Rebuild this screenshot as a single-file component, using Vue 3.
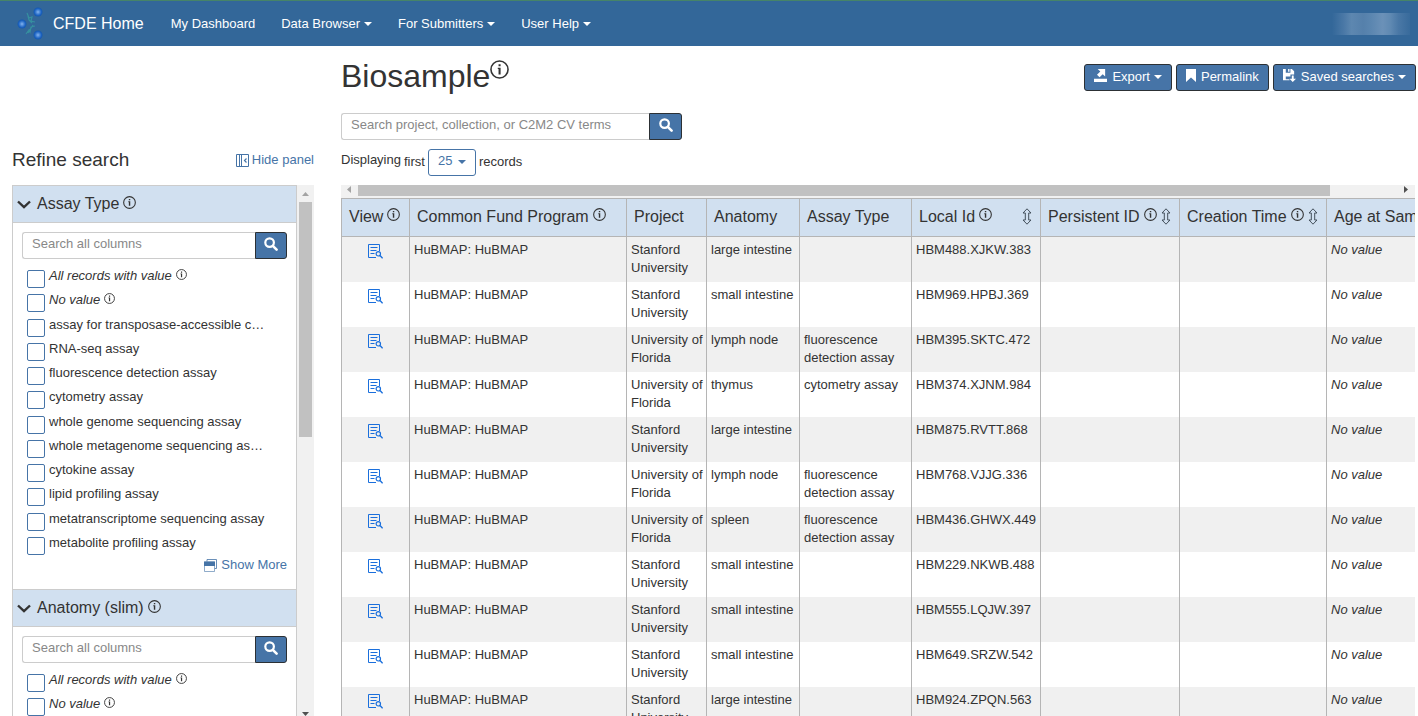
<script setup>
import { h } from 'vue'

const InfoIcon = () =>
  h('svg', { class: 'info', viewBox: '0 0 12 12', 'aria-hidden': 'true' }, [
    h('circle', { cx: 6, cy: 6, r: 5.4, fill: 'none', stroke: 'currentColor', 'stroke-width': 1 }),
    h('path', { d: 'M5.4 2.7h1.3v1.3H5.400zM4.900 4.900h1.800v4.200H5.400V5.700h-.5z', fill: 'currentColor' }),
  ])

const SearchIcon = () =>
  h('svg', { class: 'glass', viewBox: '0 0 14 14', 'aria-hidden': 'true' }, [
    h('circle', { cx: 5.6, cy: 5.6, r: 4.3, fill: 'none', stroke: 'currentColor', 'stroke-width': 2.2 }),
    h('path', { d: 'M8.8 8.8l3.8 3.8', stroke: 'currentColor', 'stroke-width': 2.6, 'stroke-linecap': 'round' }),
  ])

const menus = [
  { label: 'My Dashboard', caret: false },
  { label: 'Data Browser', caret: true },
  { label: 'For Submitters', caret: true },
  { label: 'User Help', caret: true },
]

const meta = [
  { label: 'All records with value', meta: true },
  { label: 'No value', meta: true },
]

const facets = [
  {
    id: 'assay',
    title: 'Assay Type',
    options: [
      ...meta,
      { label: 'assay for transposase-accessible c…' },
      { label: 'RNA-seq assay' },
      { label: 'fluorescence detection assay' },
      { label: 'cytometry assay' },
      { label: 'whole genome sequencing assay' },
      { label: 'whole metagenome sequencing as…' },
      { label: 'cytokine assay' },
      { label: 'lipid profiling assay' },
      { label: 'metatranscriptome sequencing assay' },
      { label: 'metabolite profiling assay' },
    ],
    more: true,
  },
  { id: 'anatomy', title: 'Anatomy (slim)', options: meta, more: false },
]

const columns = [
  { key: 'view', label: 'View', info: true },
  { key: 'program', label: 'Common Fund Program', info: true },
  { key: 'project', label: 'Project' },
  { key: 'anatomy', label: 'Anatomy' },
  { key: 'assay', label: 'Assay Type' },
  { key: 'local', label: 'Local Id', info: true, sort: true },
  { key: 'pid', label: 'Persistent ID', info: true, sort: true },
  { key: 'created', label: 'Creation Time', info: true, sort: true },
  { key: 'age', label: 'Age at Sampling', sort: true },
]

const S = 'Stanford University'
const F = 'University of Florida'
const rows = [
  [S, 'large intestine', '', 'HBM488.XJKW.383'],
  [S, 'small intestine', '', 'HBM969.HPBJ.369'],
  [F, 'lymph node', 'fluorescence detection assay', 'HBM395.SKTC.472'],
  [F, 'thymus', 'cytometry assay', 'HBM374.XJNM.984'],
  [S, 'large intestine', '', 'HBM875.RVTT.868'],
  [F, 'lymph node', 'fluorescence detection assay', 'HBM768.VJJG.336'],
  [F, 'spleen', 'fluorescence detection assay', 'HBM436.GHWX.449'],
  [S, 'small intestine', '', 'HBM229.NKWB.488'],
  [S, 'small intestine', '', 'HBM555.LQJW.397'],
  [S, 'small intestine', '', 'HBM649.SRZW.542'],
  [S, 'large intestine', '', 'HBM924.ZPQN.563'],
]
</script>

<template>
  <div class="page">
    <nav class="navbar">
      <a class="brand" href="#">
        <svg class="logo" viewBox="0 0 28 34" aria-hidden="true">
          <defs>
            <radialGradient id="ball">
              <stop offset="0" stop-color="#86b4ee" />
              <stop offset=".4" stop-color="#4a88d8" />
              <stop offset=".75" stop-color="#1c62c0" />
              <stop offset="1" stop-color="#1458b0" />
            </radialGradient>
          </defs>
          <path
            d="M11 6l2 5 3-1-1 4 4 1M12 9l1 4 3 3M10 27l3-4 1 2 1-5 4-1M12 26l5-8"
            fill="none" stroke="#379aa0" stroke-width="1.200" opacity=".8"
          />
          <circle cx="22" cy="5" r="4.500" fill="url(#ball)" />
          <circle cx="6" cy="17" r="4.500" fill="url(#ball)" />
          <circle cx="22" cy="28" r="4.500" fill="url(#ball)" />
        </svg>
        <span>CFDE Home</span>
      </a>
      <a v-for="m in menus" :key="m.label" class="menu" href="#">
        {{ m.label }}<i v-if="m.caret" class="caret"></i>
      </a>
      <span class="user"></span>
    </nav>

    <div class="columns">
      <aside class="side">
        <div class="side-head">
          <h2>Refine search</h2>
          <button class="link" type="button">
            <svg class="hide-icon" viewBox="0 0 13 13" aria-hidden="true">
              <path d="M.5.5h12v12H.5zM3.5.5v12M5.5.5v12" fill="none" stroke="currentColor" />
              <path d="M10.5 4.5l-2 2 2 2" fill="none" stroke="currentColor" stroke-width="1.2" />
            </svg>
            Hide panel
          </button>
        </div>
        <div class="side-scroll">
          <div class="facets">
            <section v-for="f in facets" :key="f.id" class="facet">
              <h3>
                <svg class="chevron" viewBox="0 0 14 9" aria-hidden="true">
                  <path d="M1 1.500L7 7.200l6-5.700" fill="none" stroke="currentColor" stroke-width="2.400" />
                </svg>
                {{ f.title }}
                <InfoIcon />
              </h3>
              <div class="facet-body">
                <div class="search">
                  <input type="text" placeholder="Search all columns" :aria-label="'Search ' + f.title" />
                  <button type="button" aria-label="Search"><SearchIcon /></button>
                </div>
                <ul>
                  <li v-for="(o, i) in f.options" :key="o.label">
                    <input :id="f.id + i" type="checkbox" />
                    <label :for="f.id + i" :class="{ meta: o.meta }">{{ o.label }}<InfoIcon v-if="o.meta" /></label>
                  </li>
                </ul>
                <button v-if="f.more" class="link more" type="button">
                  <svg class="more-icon" viewBox="0 0 13 13" aria-hidden="true">
                    <path d="M3 2.500V.5h9.500v9h-2" fill="none" stroke="currentColor" opacity=".8" />
                    <path d="M.5 3h10v9.500H.5z" fill="#fff" stroke="currentColor" stroke-opacity=".6" />
                    <path d="M0 2.500h11V7H0z" fill="currentColor" />
                  </svg>
                  Show More
                </button>
              </div>
            </section>
          </div>
          <div class="vbar" aria-hidden="true">
            <svg viewBox="0 0 7 4"><path d="M0 4l3.500-4L7 4z" fill="#a3a3a3" /></svg>
            <div class="vtrack"><div class="vthumb"></div></div>
            <svg viewBox="0 0 7 4"><path d="M0 0l3.500 4L7 0z" fill="#505050" /></svg>
          </div>
        </div>
      </aside>

      <main class="main">
        <header class="title-row">
          <h1>Biosample<InfoIcon /></h1>
          <div class="actions">
            <button type="button">
              <svg class="act export" viewBox="0 0 14 14" aria-hidden="true">
                <path d="M0 10.500h14V14H0zM4 0h8v8L9.400 5.600 6 9 3.200 6.300l3.600-3.500z" fill="currentColor" />
              </svg>
              Export<i class="caret"></i>
            </button>
            <button type="button">
              <svg class="act mark" viewBox="0 0 10 13" aria-hidden="true">
                <path d="M0 0h10v13L5 8.500 0 13z" fill="currentColor" />
              </svg>
              Permalink
            </button>
            <button type="button">
              <svg class="act save" viewBox="0 0 14 14" aria-hidden="true">
                <path fill-rule="evenodd" d="M0 0h3v4h5V0h1.500L12 2.500V6H8v2H3v3h4v1H0zM5.500 0H7v3H5.500z" fill="currentColor" />
                <path d="M9.500 7h2v3.500H14L10.500 14 7 10.500h2.500z" fill="currentColor" />
              </svg>
              Saved searches<i class="caret"></i>
            </button>
          </div>
        </header>

        <div class="search wide">
          <input type="text" placeholder="Search project, collection, or C2M2 CV terms" aria-label="Search records" />
          <button type="button" aria-label="Search"><SearchIcon /></button>
        </div>

        <div class="showing">
          <span>Displaying</span>
          <label for="limit">first</label>
          <span class="limit">
            <select id="limit"><option>25</option></select>
            <i class="caret"></i>
          </span>
          <span>records</span>
        </div>

        <div class="hbar" aria-hidden="true">
          <svg viewBox="0 0 4 7"><path d="M4 0L0 3.500 4 7z" fill="#a3a3a3" /></svg>
          <div class="htrack"><div class="hthumb"></div></div>
          <svg viewBox="0 0 4 7"><path d="M0 0l4 3.500L0 7z" fill="#505050" /></svg>
        </div>
        <div class="table-wrap">
          <table>
            <colgroup>
              <col v-for="c in columns" :key="c.key" :class="'c-' + c.key" />
            </colgroup>
            <thead>
              <tr>
                <th v-for="c in columns" :key="c.key" scope="col">
                  <div class="th">
                    <span>{{ c.label }}</span>
                    <InfoIcon v-if="c.info" />
                    <svg v-if="c.sort" class="sort" viewBox="0 0 10 17" aria-hidden="true">
                      <path
                        d="M5 .8L9 5H6.700v7H9L5 16.200 1 12h2.300V5H1z"
                        fill="none" stroke="currentColor" stroke-width="1" stroke-linejoin="round"
                      />
                    </svg>
                  </div>
                </th>
              </tr>
            </thead>
            <tbody>
              <tr v-for="r in rows" :key="r[3]">
                <td class="view">
                  <a href="#" aria-label="View record">
                    <svg viewBox="0 0 15 15" aria-hidden="true">
                      <path d="M11.500 7V.5H.5v13H8" fill="none" stroke="#1a6fdc" />
                      <path d="M2.500 3.500h7M2.500 6.500h6M2.500 9.500h4" stroke="#1a6fdc" />
                      <circle cx="10.300" cy="9.800" r="2.200" fill="none" stroke="#1a6fdc" stroke-width="1.200" />
                      <path d="M12 11.500l2.600 2.800" stroke="#1a6fdc" stroke-width="1.400" />
                    </svg>
                  </a>
                </td>
                <td>HuBMAP: HuBMAP</td>
                <td>{{ r[0] }}</td>
                <td>{{ r[1] }}</td>
                <td>{{ r[2] }}</td>
                <td>{{ r[3] }}</td>
                <td></td>
                <td></td>
                <td><em>No value</em></td>
              </tr>
            </tbody>
          </table>
        </div>
      </main>
    </div>
  </div>
</template>

<style>
body { margin: 0; }
</style>

<style scoped>
.page {
  height: 100vh;
  display: flex;
  flex-direction: column;
  overflow: hidden;
  background: #fff;
  color: #333;
  font: 13px/18px "Liberation Sans", Arial, sans-serif;
}
.page :deep(svg) { flex: none; display: block; }
h1, h2, h3, ul { margin: 0; padding: 0; font-weight: 400; }
button, input, select { font: inherit; box-sizing: border-box; margin: 0; }
button { cursor: pointer; }
.caret {
  display: inline-block;
  border: 4px solid transparent;
  border-top-color: currentColor;
  border-bottom: 0;
  flex: none;
}

.navbar {
  flex: none;
  display: flex;
  align-items: center;
  height: 45px;
  padding: 0 8px 0 16px;
  border-top: 1px solid #468468;
  background: #336799;
}
.navbar a { color: #fff; text-decoration: none; display: flex; align-items: center; }
.brand { gap: 9px; font-size: 16px; margin-right: 27px; }
.logo { width: 28px; height: 34px; }
.menu { margin-right: 26px; gap: 4px; }
.user {
  width: 78px;
  height: 22px;
  margin-left: auto;
  background: linear-gradient(90deg, #336799, #4a78a6 15%, #5d87b0 25%, #5580ab 40%, #5b86b0 50%, #6b91b8 65%, #5f89b2 75%, #4a78a6 85%, #3e6f9f 95%, #386b9c);
}

.columns { flex: 1; min-height: 0; display: flex; }
.side {
  flex: none;
  width: 302px;
  padding-left: 12px;
  margin-right: 27px;
  display: flex;
  flex-direction: column;
}
.side-head {
  display: flex;
  justify-content: space-between;
  align-items: center;
  height: 24px;
  padding: 102px 0 13px;
}
h2 { font-size: 19px; line-height: 24px; }
.link {
  display: flex;
  align-items: center;
  gap: 3px;
  padding: 0;
  border: 0;
  background: none;
  color: #4674a7;
}
.hide-icon { width: 13px; height: 13px; }
.side-scroll { flex: 1; min-height: 0; display: flex; }
.facets { flex: 1; overflow: hidden; border: 1px solid #ccc; border-width: 0 1px; }
h3 {
  display: flex;
  align-items: center;
  height: 36px;
  padding: 0 4px;
  border: 1px solid #ccc;
  border-width: 1px 0;
  background: #d1e0f0;
  font-size: 16px;
}
.chevron { width: 14px; height: 9px; margin-right: 6px; }
h3 :deep(.info) { width: 13px; height: 13px; margin: 0 0 4px 4px; }
.facet-body { padding: 9px 9px 17px; }
.search { display: flex; height: 27px; }
.search input {
  flex: 1;
  min-width: 0;
  padding: 0 9px 3px;
  border: 1px solid #ccc;
  border-right: 0;
  border-radius: 3px 0 0 3px;
  background: #fff;
  color: #333;
}
.search input::placeholder { color: #888; opacity: 1; }
.search button {
  width: 32px;
  padding: 0 0 4px;
  display: flex;
  align-items: center;
  justify-content: center;
  border: 1px solid #2c3034;
  border-radius: 0 3px 3px 0;
  background: #4674a7;
  color: #fff;
}
.search :deep(.glass) { width: 14px; height: 14px; }
ul {
  list-style: none;
  display: grid;
  height: 291px;
  grid-template-rows: repeat(12, 1fr);
  margin-top: 8px;
}
li { display: flex; align-items: flex-start; padding-left: 5px; gap: 4px; min-height: 0; }
li input {
  appearance: none;
  flex: none;
  width: 18px;
  height: 18px;
  margin-top: 3px;
  border: 1px solid #4674a7;
  border-radius: 2px;
  background: #fff;
}
label.meta { display: flex; align-items: center; font-style: italic; }
.meta :deep(.info) { width: 11px; height: 11px; margin: 0 0 3px 4px; }
.more { margin-left: auto; gap: 4px; line-height: 14px; }
.more-icon { width: 13px; height: 13px; }
.vbar {
  flex: none;
  width: 17px;
  display: flex;
  flex-direction: column;
  align-items: center;
  background: #f1f1f1;
}
.vbar svg { width: 7px; height: 4px; margin: 7px 0 6px; }
.vbar svg:last-child { margin: 9px 0 0; }
.vtrack { flex: 1; width: 13px; }
.vthumb { height: 47%; background: #c1c1c1; }

.main { flex: 1; min-width: 0; display: flex; flex-direction: column; }
.title-row {
  flex: none;
  display: flex;
  justify-content: space-between;
  align-items: flex-start;
  padding: 11px 2px 0 0;
  height: 56px;
}
h1 { display: flex; font-size: 32px; line-height: 38px; }
h1 :deep(.info) { width: 19px; height: 19px; margin-top: 3px; }
.actions { display: flex; gap: 4px; padding-top: 7px; }
.actions button {
  display: flex;
  align-items: center;
  height: 27px;
  padding: 0 9px 2px;
  border: 1px solid #2c3034;
  border-radius: 3px;
  background: #4674a7;
  color: #fff;
  white-space: nowrap;
}
.actions .caret { margin-left: 4px; }
.act { margin: 0 5px 3px 0; }
.export { width: 13px; height: 13px; }
.mark { width: 10px; height: 13px; }
.save { width: 13px; height: 13px; }
.wide { flex: none; width: 341px; }
.wide button { width: 33px; }
.showing {
  flex: none;
  display: flex;
  align-items: center;
  height: 27px;
  margin: 9px 0;
  gap: 3px;
}
.showing > * { padding-bottom: 1px; }
.showing > span:first-child { padding-bottom: 5px; }
.showing > .limit { display: grid; align-items: center; padding: 0; }
.limit select, .limit .caret { grid-area: 1 / 1; color: #4674a7; }
.limit select {
  appearance: none;
  width: 48px;
  height: 27px;
  padding: 0 0 3px 9px;
  border: 1px solid #4674a7;
  border-radius: 3px;
  background: #fff;
}
.limit .caret { justify-self: end; margin: 0 10px 2px 0; pointer-events: none; }

.hbar {
  flex: none;
  display: flex;
  height: 13px;
  margin-right: 3px;
  background: #f1f1f1;
}
.hbar svg { width: 4px; height: 7px; margin: 1px 7px 0 6px; }
.htrack { flex: 1; }
.hthumb { width: 93.5%; height: 11px; background: #c1c1c1; }
.table-wrap { flex: 1; min-height: 0; overflow: hidden; margin-right: 3px; }
table { width: 1150px; table-layout: fixed; border-collapse: separate; border-spacing: 0; }
.c-view { width: 68px; }
.c-program { width: 217px; }
.c-project { width: 80px; }
.c-anatomy { width: 93px; }
.c-assay { width: 112px; }
.c-local { width: 129px; }
.c-pid { width: 139px; }
.c-created { width: 147px; }
.c-age { width: 165px; }
th {
  height: 35px;
  padding: 0 8px 2px 7px;
  border: 1px solid #b5b5b5;
  border-right: 0;
  background: #d1e0f0;
  font-size: 16px;
  font-weight: 400;
  white-space: nowrap;
}
.th { display: flex; align-items: center; }
.th :deep(.info) { width: 13px; height: 13px; margin: 0 0 4px 4px; }
.sort { width: 10px; height: 17px; margin-left: auto; color: #44505c; }
td {
  height: 36px;
  padding: 4px 0 5px 4px;
  border-left: 1px solid #b5b5b5;
  vertical-align: top;
}
tbody tr:nth-child(odd) { background: #f0f0f0; }
.view { padding: 7px 0 0; height: 38px; }
.view svg { width: 15px; height: 15px; margin: 0 auto; }
</style>
